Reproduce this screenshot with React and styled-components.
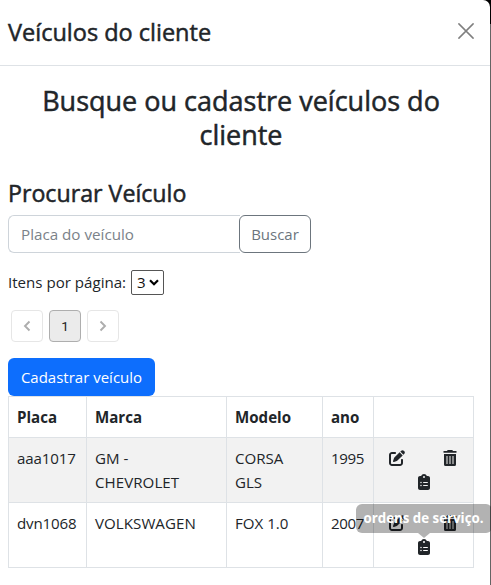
import React from "react";
import styled, { createGlobalStyle } from "styled-components";
import { FaPenToSquare, FaClipboardList } from "react-icons/fa6";

const GlobalStyle = createGlobalStyle`
  *, *::before, *::after { box-sizing: border-box; }
  html { background: #5f5f5f; }
  body {
    margin: 0;
    overflow: hidden;
    color: #212529;
    background: linear-gradient(#000 24px, #646464 24px);
    font-family: "Open Sans", "Noto Sans", sans-serif;
    font-size: 15.1px;
    line-height: 24px;
  }
  button, input, select { font-family: inherit; margin: 0; }
`;

const Modal = styled.div`
  width: 490px;
  height: 585px;
  background: #fff;
  border-top-right-radius: 7px;
`;

const Header = styled.header`
  display: flex;
  align-items: center;
  justify-content: space-between;
  height: 66px;
  padding: 0 16px 0 8px;
  border-bottom: 1px solid #dee2e6;
`;

const Title = styled.h1`
  margin: 0 0 1px;
  font-size: 23.5px;
  font-weight: 500;
  line-height: 30px;
  -webkit-text-stroke: 0.5px currentColor;
`;

const CloseButton = styled.button`
  display: flex;
  padding: 0;
  border: 0;
  background: none;
  color: #7f7f7f;
  margin-top: -3px;
`;

const Body = styled.main`
  padding: 18px 16px 0 8px;
`;

const Heading = styled.h2`
  margin: 0;
  font-size: 27px;
  font-weight: 500;
  line-height: 34px;
  text-align: center;
  -webkit-text-stroke: 0.5px currentColor;
`;

const Subheading = styled.h3`
  margin: 26px 0 6px;
  font-size: 23.2px;
  font-weight: 500;
  line-height: 31px;
  -webkit-text-stroke: 0.5px currentColor;
`;

const SearchGroup = styled.div`
  display: flex;
  height: 38px;
`;

const SearchInput = styled.input`
  width: 232px;
  padding: 0 12px;
  border: 1px solid #ced4da;
  border-right: 0;
  border-radius: 6px 0 0 6px;
  font-size: 15.2px;
  outline: 0;
  &::placeholder { color: #7b8289; opacity: 1; }
`;

const SearchButton = styled.button`
  width: 72px;
  margin-left: -1px;
  padding: 0;
  border: 1px solid #6c757d;
  border-radius: 6px;
  background: #fff;
  color: #6c757d;
  font-size: 15px;
`;

const PageSize = styled.label`
  display: flex;
  align-items: center;
  gap: 5px;
  height: 26px;
  margin-top: 16px;
`;

const Select = styled.span`
  display: flex;
  align-items: center;
  justify-content: space-between;
  width: 33px;
  height: 25px;
  padding: 0 4px 0 5px;
  border: 1px solid #555;
  border-radius: 2px;
  color: #111;
`;

const Pagination = styled.nav`
  display: flex;
  gap: 6px;
  margin: 15px 0 16px 3px;
`;

const PageButton = styled.button`
  display: flex;
  align-items: center;
  justify-content: center;
  width: 32px;
  height: 32px;
  padding: 0;
  border: 1px solid ${(p) => (p.$active ? "#aeaeae" : "#e6e6e6")};
  border-radius: 4px;
  background: ${(p) => (p.$active ? "#ebebeb" : "#fff")};
  color: ${(p) => (p.$active ? "#222" : "#adadad")};
  font: 13.5px Roboto, sans-serif;
`;

const PrimaryButton = styled.button`
  display: block;
  width: 147px;
  height: 38px;
  padding: 0;
  border: 0;
  border-radius: 6px;
  background: #0d6efd;
  color: #fff;
  font-size: 15px;
`;

const Table = styled.table`
  width: 466px;
  table-layout: fixed;
  border-collapse: collapse;
`;

const Row = styled.tr`
  height: ${(p) => (p.$head ? 41 : 65)}px;
  background: ${(p) => (p.$striped ? "#f2f2f2" : "#fff")};
`;

const Cell = styled.td`
  padding: 8px;
  border: 1px solid #dee2e6;
  text-align: left;
  vertical-align: top;
  white-space: pre-line;
  font-weight: ${(p) => (p.as === "th" ? 700 : 400)};
  letter-spacing: ${(p) => p.$track || 0}px;
`;

const ActionCell = styled(Cell)`
  padding: 0 15px;
`;

const Actions = styled.div`
  display: grid;
  grid-template-columns: 16px 1fr 16px;
  grid-template-rows: 16px 16px;
  row-gap: 8px;
  justify-items: center;
  padding: 12px 0;
  svg { display: block; }
`;

const OrdersAction = styled.span`
  position: relative;
  grid-column: 1 / -1;
  width: 16px;
  height: 16px;
`;

const Tooltip = styled.span`
  position: absolute;
  bottom: 22px;
  left: -60px;
  width: 136px;
  height: 29px;
  border-radius: 6px;
  background: rgba(0, 0, 0, 0.3);
  color: #fff;
  font-size: 13.3px;
  font-weight: 700;
  line-height: 29px;
  text-align: center;
  white-space: nowrap;
  &::after {
    content: "";
    position: absolute;
    top: 100%;
    left: 62px;
    border: 6px solid transparent;
    border-top: 5px solid rgba(0, 0, 0, 0.3);
    border-bottom: 0;
  }
`;

const columns = [
  { label: "Placa", width: 78 },
  { label: "Marca", width: 140 },
  { label: "Modelo", width: 96 },
  { label: "ano", width: 51 },
  { label: "", width: 100 },
];

const vehicles = [
  { plate: "aaa1017", brand: "GM -\nCHEVROLET", model: "CORSA\nGLS", year: "1995" },
  { plate: "dvn1068", brand: "VOLKSWAGEN", model: "FOX 1.0", year: "2007", tooltip: true },
];

function Chevron({ flip }) {
  return (
    <svg width="8" height="12" viewBox="0 0 8 12" fill="none" stroke="currentColor" strokeWidth="1.9">
      <path d={flip ? "M1.5 1.5 6 6 1.5 10.5" : "M6.5 1.5 2 6 6.5 10.5"} />
    </svg>
  );
}

function TrashIcon() {
  return (
    <svg width="16" height="16" viewBox="0 0 16 16" fill="currentColor">
      <path d="M1.5 1H5L5.7 0h4.6L11 1h3.5v1.7h-13z" />
      <path d="M2 4h12v10.5a1.5 1.5 0 0 1-1.5 1.5h-9A1.5 1.5 0 0 1 2 14.5z" />
      <path d="M4 6h2v8H4zM7 6h2v8H7zM10 6h2v8h-2z" fill="#898b8c" />
    </svg>
  );
}

export default function App() {
  return (
    <>
      <GlobalStyle />
      <Modal>
        <Header>
          <Title>Veículos do cliente</Title>
          <CloseButton aria-label="Fechar">
            <svg width="16" height="16" viewBox="0 0 16 16" stroke="currentColor" strokeWidth="1.5" strokeLinecap="round">
              <path d="M.9.9 15.1 15.1M15.1.9.9 15.1" />
            </svg>
          </CloseButton>
        </Header>
        <Body>
          <Heading>Busque ou cadastre veículos do cliente</Heading>
          <Subheading>Procurar Veículo</Subheading>
          <SearchGroup>
            <SearchInput placeholder="Placa do veículo" />
            <SearchButton>Buscar</SearchButton>
          </SearchGroup>
          <PageSize>
            Itens por página:
            <Select>
              3
              <svg width="10" height="7" viewBox="0 0 10 7" fill="none" stroke="#000" strokeWidth="2.2">
                <path d="M1 1.2 5 5.2 9 1.2" />
              </svg>
            </Select>
          </PageSize>
          <Pagination>
            <PageButton aria-label="Anterior"><Chevron /></PageButton>
            <PageButton $active>1</PageButton>
            <PageButton aria-label="Próxima"><Chevron flip /></PageButton>
          </Pagination>
          <PrimaryButton>Cadastrar veículo</PrimaryButton>
          <Table>
            <colgroup>
              {columns.map((c) => <col key={c.label} width={c.width} />)}
            </colgroup>
            <thead>
              <Row $head>
                {columns.map((c) => <Cell as="th" key={c.label}>{c.label}</Cell>)}
              </Row>
            </thead>
            <tbody>
              {vehicles.map((v, i) => (
                <Row key={v.plate} $striped={i % 2 === 0}>
                  <Cell $track={-0.15}>{v.plate}</Cell>
                  <Cell $track={0.05}>{v.brand}</Cell>
                  <Cell>{v.model}</Cell>
                  <Cell $track={-0.4}>{v.year}</Cell>
                  <ActionCell>
                    <Actions>
                      <FaPenToSquare size={16} />
                      <span />
                      <TrashIcon />
                      <OrdersAction>
                        <FaClipboardList size={16} />
                        {v.tooltip && <Tooltip>ordens de serviço.</Tooltip>}
                      </OrdersAction>
                    </Actions>
                  </ActionCell>
                </Row>
              ))}
            </tbody>
          </Table>
        </Body>
      </Modal>
    </>
  );
}
